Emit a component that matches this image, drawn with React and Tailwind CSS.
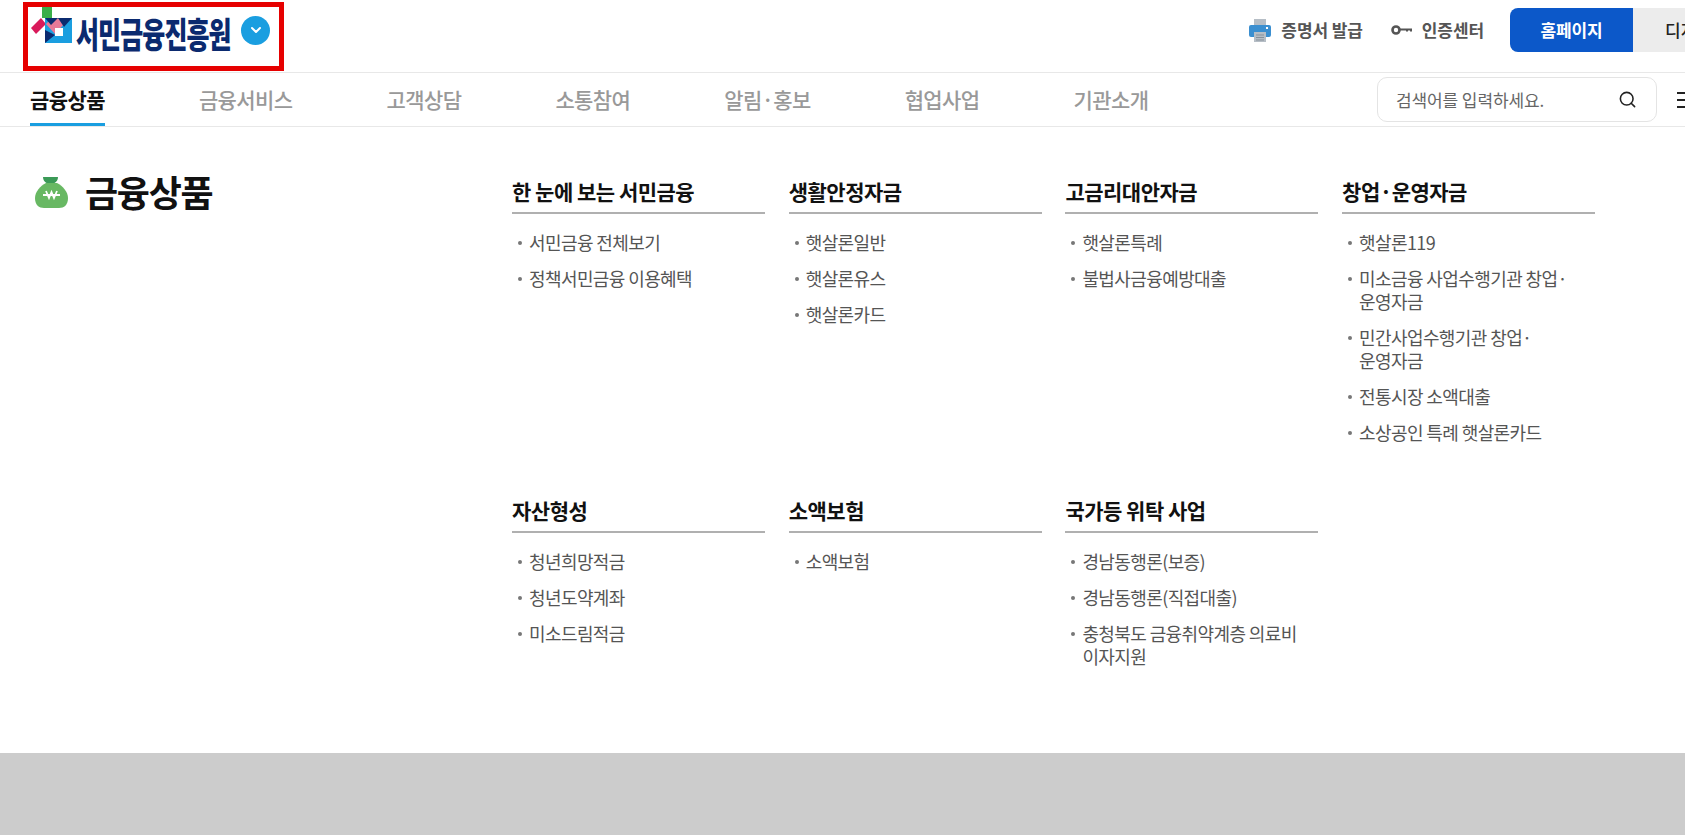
import { Search, ChevronDown } from "lucide-react";

const row1 = [
  { title: "한 눈에 보는 서민금융", items: ["서민금융 전체보기", "정책서민금융 이용혜택"] },
  { title: "생활안정자금", items: ["햇살론일반", "햇살론유스", "햇살론카드"] },
  { title: "고금리대안자금", items: ["햇살론특례", "불법사금융예방대출"] },
  {
    title: "창업·운영자금",
    items: [
      "햇살론119",
      "미소금융 사업수행기관 창업·\n운영자금",
      "민간사업수행기관 창업·\n운영자금",
      "전통시장 소액대출",
      "소상공인 특례 햇살론카드",
    ],
  },
];

const row2 = [
  { title: "자산형성", items: ["청년희망적금", "청년도약계좌", "미소드림적금"] },
  { title: "소액보험", items: ["소액보험"] },
  {
    title: "국가등 위탁 사업",
    items: ["경남동행론(보증)", "경남동행론(직접대출)", "충청북도 금융취약계층 의료비\n이자지원"],
  },
];

const navItems = ["금융상품", "금융서비스", "고객상담", "소통참여", "알림·홍보", "협업사업", "기관소개"];

function LogoMark() {
  return (
    <svg width="41" height="36" viewBox="0 0 41 36" className="shrink-0 self-start">
      <rect x="11" y="0" width="10" height="11" fill="#3aae49" />
      <polygon points="0,21 10,11 15,17 5,27" fill="#d91a5b" />
      <rect x="14" y="11" width="27" height="25" fill="#1a9ee0" />
      <polygon points="15,17 21,11 27,11 33,17 24,27" fill="#e87a98" />
      <polygon points="14,11 27,11 20,18" fill="#0b2a6f" />
      <polygon points="27,11 41,11 33,20" fill="#0b2a6f" />
      <polygon points="14,23 24,28 14,36" fill="#0b2a6f" />
      <rect x="24" y="21" width="8" height="8" fill="#ffffff" />
    </svg>
  );
}

function MoneyBag() {
  return (
    <svg width="33" height="31" viewBox="0 0 33 31" className="ml-[1px] mt-[8px] shrink-0">
      <path d="M8 0h15c0 3-1.500 5-3.500 6h-8C9.500 5 8 3 8 0z" fill="#3b9a57" />
      <path d="M11 6h11c6 3 11 9 11 15 0 7-4 10-9 10H9c-5 0-9-3-9-10 0-6 5-12 11-15z" fill="#68b863" />
      <path d="M8 18h17M11 14l3 7 2.500-6 2.500 6 3-7" fill="none" stroke="#ffffff" strokeWidth="1.800" />
    </svg>
  );
}

function PrinterIcon() {
  return (
    <svg width="22" height="23" viewBox="0 0 22 23" className="shrink-0">
      <rect x="5" y="0" width="12" height="7" fill="#b6bec6" />
      <path d="M2 6h18a2 2 0 0 1 2 2v8a2 2 0 0 1-2 2H2a2 2 0 0 1-2-2V8a2 2 0 0 1 2-2z" fill="#3b8fd0" />
      <rect x="5" y="13" width="12" height="10" fill="#b6bec6" />
      <path d="M7 16h8M7 18.500h8M7 21h8" stroke="#87919b" strokeWidth="1" />
      <rect x="17" y="8" width="2" height="2" fill="#ffffff" />
    </svg>
  );
}

function KeyIcon() {
  return (
    <svg width="21" height="10" viewBox="0 0 21 10" className="shrink-0">
      <circle cx="5" cy="5" r="3.500" fill="none" stroke="#555555" strokeWidth="2.600" />
      <path d="M9 3.500h12v3h-2v-1h-2v1h-2v-1H9z" fill="#555555" />
    </svg>
  );
}

function MenuColumn({ title, items }) {
  return (
    <div className="w-[253px]">
      <h3 className="h-[45px] border-b-2 border-[#b0b0b0] text-[21px] leading-[44px] font-semibold tracking-[-0.5px] text-[#111111]">
        {title}
      </h3>
      <ul className="mt-[16.5px] flex flex-col gap-[13px] pl-[17px]">
        {items.map((item) => (
          <li
            key={item}
            className="relative whitespace-pre text-[18px] leading-[23px] tracking-[-0.6px] text-[#555555]"
          >
            <span className="absolute left-[-11px] top-[10px] h-[4px] w-[4px] rounded-full bg-[#777777]" />
            {item}
          </li>
        ))}
      </ul>
    </div>
  );
}

export default function App() {
  return (
    <div
      className="flex h-[835px] w-[1685px] flex-col overflow-hidden bg-white"
      style={{ fontFamily: '"Noto Sans CJK KR", "Noto Sans", sans-serif' }}
    >
      <header className="flex h-[73px] shrink-0 items-start border-b border-[#e8e8e8] pl-[23px]">
        <div className="mt-[2px] flex h-[69px] w-[261px] items-center border-[5px] border-[#e60000] pl-[3px]">
          <LogoMark />
          <span className="mb-[7px] ml-[4px] w-[154px] origin-center scale-y-[1.4] whitespace-nowrap text-[25px] font-black leading-none tracking-[-0.9px] text-[#0b2a6f]">
            서민금융진흥원
          </span>
          <span className="mb-[13px] ml-[11px] flex h-[29px] w-[29px] items-center justify-center rounded-full bg-[#1a9ee0]">
            <ChevronDown size={16} strokeWidth={3} color="#ffffff" />
          </span>
        </div>
        <div className="ml-auto mt-[8px] flex items-center">
          <PrinterIcon />
          <span className="ml-[10px] text-[17px] font-bold tracking-[-0.1px] text-[#555555]">증명서 발급</span>
          <span className="ml-[28px]">
            <KeyIcon />
          </span>
          <span className="ml-[10px] text-[17px] font-bold tracking-[-0.1px] text-[#555555]">인증센터</span>
          <button className="ml-[26px] h-[44px] w-[123px] rounded-l-[8px] bg-[#0c58c9] text-[17px] font-bold tracking-[-0.1px] text-white">
            홈페이지
          </button>
          <button className="mr-[-60px] h-[44px] w-[112px] bg-[#ececec] pl-[32px] text-left text-[17px] font-medium text-[#222222]">
            디지털
          </button>
        </div>
      </header>

      <nav className="flex h-[54px] shrink-0 items-center border-b border-[#e8e8e8] pl-[30px]">
        <div className="flex h-full gap-[94px]">
          {navItems.map((item, i) => (
            <a
              key={item}
              className={
                i === 0
                  ? "flex h-full items-center border-b-[3px] border-[#1a9ee0] pt-[3px] text-[21px] font-semibold tracking-[-0.6px] text-[#111111]"
                  : "flex h-full items-center border-b-[3px] border-transparent pt-[3px] text-[21px] font-medium tracking-[-0.6px] text-[#999999]"
              }
            >
              {item}
            </a>
          ))}
        </div>
        <div className="ml-auto flex items-center">
          <div className="flex h-[45px] w-[280px] items-center justify-between rounded-[10px] border border-[#e4e4e4] pl-[18px] pr-[19px]">
            <span className="text-[17px] tracking-[-0.1px] text-[#666666]">검색어를 입력하세요.</span>
            <Search size={19} strokeWidth={2} color="#222222" />
          </div>
          <div className="ml-[20px] mr-[-12px] flex w-[20px] flex-col gap-[5px]">
            <span className="h-[2px] w-full bg-[#222222]" />
            <span className="h-[2px] w-full bg-[#222222]" />
            <span className="h-[2px] w-full bg-[#222222]" />
          </div>
        </div>
      </nav>

      <main className="flex flex-1 pl-[34px]">
        <div className="flex w-[478px] items-start pt-[42px]">
          <MoneyBag />
          <h2 className="ml-[17px] text-[36px] font-semibold leading-[44px] tracking-[-1.3px] text-[#111111]">금융상품</h2>
        </div>
        <div className="pt-[42px]">
          <div className="flex h-[319px] gap-[23.7px]">
            {row1.map((col) => (
              <MenuColumn key={col.title} {...col} />
            ))}
          </div>
          <div className="flex gap-[23.7px]">
            {row2.map((col) => (
              <MenuColumn key={col.title} {...col} />
            ))}
          </div>
        </div>
      </main>

      <div className="h-[82px] shrink-0 bg-[#cccccc]" />
    </div>
  );
}
